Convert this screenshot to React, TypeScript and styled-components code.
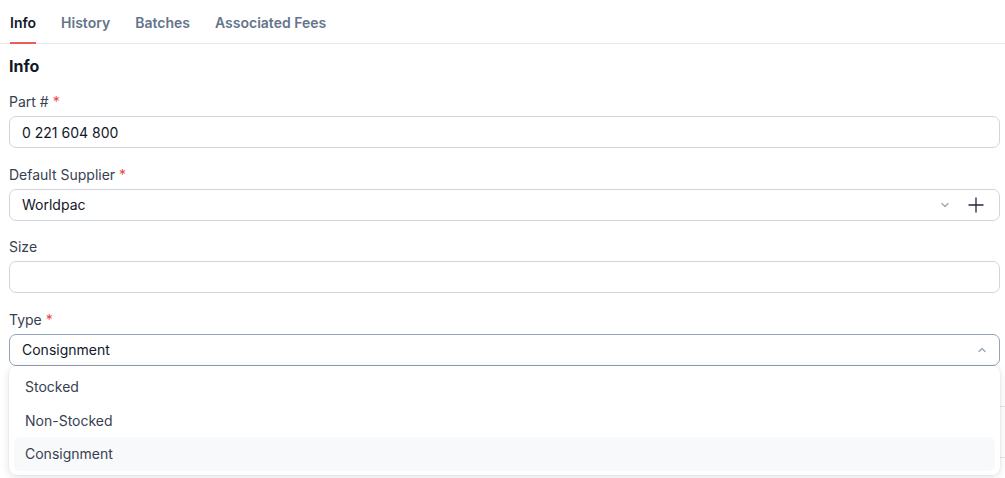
import React, { useState } from "react";
import styled, { createGlobalStyle } from "styled-components";

const GlobalStyle = createGlobalStyle`
    html, body {
        margin: 0;
        padding: 0;
        background: #fff;
    }
    body {
        font-family: Inter, "Noto Sans", "Liberation Sans", sans-serif;
        color: #111827;
        -webkit-font-smoothing: antialiased;
    }
    * {
        box-sizing: border-box;
    }
`;

const Page = styled.div`
    width: 1005px;
    height: 478px;
    overflow: hidden;
`;

const TabBar = styled.div`
    display: flex;
    gap: 25px;
    height: 44px;
    padding: 0 0 0 10px;
    border-bottom: 1px solid #e5e7eb;
`;

const Tab = styled.div<{ $active?: boolean }>`
    display: flex;
    align-items: center;
    height: 44px;
    margin-bottom: -1px;
    padding-top: 3px;
    font-size: 14px;
    font-weight: 600;
    color: ${p => (p.$active ? "#111827" : "#64748b")};
    border-bottom: 2px solid ${p => (p.$active ? "#ef5b5b" : "transparent")};
    cursor: pointer;
`;

const Body = styled.div`
    padding: 0 5px 0 9px;
`;

const Heading = styled.h2`
    margin: 12px 0 16px;
    font-size: 16px;
    line-height: 20px;
    font-weight: 700;
    color: #111827;
`;

const Field = styled.div`
    position: relative;
    margin-bottom: 16.5px;
`;

const Label = styled.div`
    font-size: 14px;
    line-height: 20px;
    margin-bottom: 4px;
    color: #374151;
`;

const Required = styled.span`
    color: #ef4444;
    margin-left: 4px;
`;

const Input = styled.input`
    display: block;
    width: 100%;
    height: 32px;
    padding: 0 12px;
    border: 1px solid #d1d5db;
    border-radius: 7px;
    font-family: inherit;
    font-size: 14px;
    color: #111827;
    background: #fff;
    outline: none;
`;

const SelectBox = styled.div<{ $open?: boolean }>`
    display: flex;
    align-items: center;
    height: 32px;
    padding: 0 12px;
    border: 1px solid ${p => (p.$open ? "#94a3b8" : "#d1d5db")};
    border-radius: 7px;
    font-size: 14px;
    color: #111827;
    background: #fff;
    cursor: pointer;
`;

const SelectValue = styled.span`
    flex: 1;
`;

const SelectIcons = styled.div`
    display: flex;
    align-items: center;
    gap: 17px;
    margin-right: 2px;
`;

const Menu = styled.div`
    position: absolute;
    left: 0;
    right: 0;
    top: 56px;
    padding: 4px 5px;
    background: #fff;
    border-radius: 8px;
    box-shadow: 0 2px 8px rgba(15, 23, 42, 0.12), 0 0 0 1px rgba(15, 23, 42, 0.03);
    z-index: 10;
`;

const MenuItem = styled.div<{ $selected?: boolean }>`
    display: flex;
    align-items: center;
    height: 33.7px;
    padding: 0 11px;
    border-radius: 6px;
    font-size: 14px;
    color: #374151;
    background: ${p => (p.$selected ? "#f8f9fb" : "transparent")};
    cursor: pointer;
`;

const Rows = styled.div`
    margin-top: 40px;
    margin-right: -5px;
`;

const Row = styled.div`
    height: 51px;
    border-top: 1px solid #e5e7eb;
`;

const ChevronDown = () => (
    <svg width="10" height="10" viewBox="0 0 10 10" fill="none">
        <path d="M2 3.5 L5 6.5 L8 3.5" stroke="#9ca3af" strokeWidth="1.2" strokeLinecap="round" strokeLinejoin="round" />
    </svg>
);

const ChevronUp = () => (
    <svg width="10" height="10" viewBox="0 0 10 10" fill="none">
        <path d="M2 6.5 L5 3.5 L8 6.5" stroke="#94a3b8" strokeWidth="1.3" strokeLinecap="round" strokeLinejoin="round" />
    </svg>
);

const Plus = () => (
    <svg width="18" height="18" viewBox="0 0 18 18" fill="none">
        <path d="M9 1.5 V16.5 M1.5 9 H16.5" stroke="#1f2937" strokeWidth="1.3" />
    </svg>
);

const tabs = ["Info", "History", "Batches", "Associated Fees"];
const types = ["Stocked", "Non-Stocked", "Consignment"];

export default function App() {
    const [tab, setTab] = useState("Info");
    const [type, setType] = useState("Consignment");
    const [open, setOpen] = useState(true);

    return (
        <Page>
            <GlobalStyle />
            <TabBar>
                {tabs.map(t => (
                    <Tab key={t} $active={t === tab} onClick={() => setTab(t)}>
                        {t}
                    </Tab>
                ))}
            </TabBar>
            <Body>
                <Heading>Info</Heading>
                <Field>
                    <Label>
                        Part #<Required>*</Required>
                    </Label>
                    <Input defaultValue="0 221 604 800" />
                </Field>
                <Field>
                    <Label>
                        Default Supplier<Required>*</Required>
                    </Label>
                    <SelectBox>
                        <SelectValue>Worldpac</SelectValue>
                        <SelectIcons>
                            <ChevronDown />
                            <Plus />
                        </SelectIcons>
                    </SelectBox>
                </Field>
                <Field>
                    <Label>Size</Label>
                    <Input defaultValue="" />
                </Field>
                <Field>
                    <Label>
                        Type<Required>*</Required>
                    </Label>
                    <SelectBox $open={open} onClick={() => setOpen(!open)}>
                        <SelectValue>{type}</SelectValue>
                        <ChevronUp />
                    </SelectBox>
                    {open && (
                        <Menu>
                            {types.map(t => (
                                <MenuItem
                                    key={t}
                                    $selected={t === type}
                                    onClick={() => {
                                        setType(t);
                                        setOpen(false);
                                    }}
                                >
                                    {t}
                                </MenuItem>
                            ))}
                        </Menu>
                    )}
                </Field>
                <Rows>
                    <Row />
                    <Row />
                </Rows>
            </Body>
        </Page>
    );
}
